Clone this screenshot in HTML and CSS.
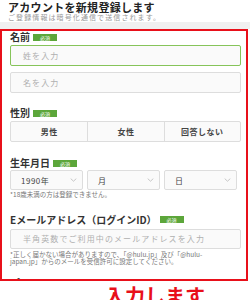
FILE: index.html
```html
<!DOCTYPE html>
<html lang="ja">
<head>
<meta charset="utf-8">
<link rel="stylesheet" href="styles.css">
</head>
<body>
<div class="header">
  <h1 class="title">アカウントを新規登録します</h1>
  <p class="sub">ご登録情報は暗号化通信で送信されます。</p>
</div>
<div class="band"></div>
<div class="frame">
  <div class="field f-name">
    <div class="label"><span>名前</span><span class="badge">必須</span></div>
    <div class="input active"><span class="ph">姓を入力</span></div>
    <div class="input second"><span class="ph">名を入力</span></div>
  </div>
  <div class="field f-gender">
    <div class="label"><span>性別</span><span class="badge">必須</span></div>
    <div class="seg">
      <div class="seg-item">男性</div>
      <div class="seg-item">女性</div>
      <div class="seg-item">回答しない</div>
    </div>
  </div>
  <div class="field f-birth">
    <div class="label"><span>生年月日</span><span class="badge">必須</span></div>
    <div class="selects">
      <div class="select"><span>1990年</span><svg class="chev" viewBox="0 0 8 5" width="7" height="4"><path d="M0.5 0.8 L4 4 L7.5 0.8" fill="none" stroke="#aaa" stroke-width="0.8"/></svg></div>
      <div class="select"><span>月</span><svg class="chev" viewBox="0 0 8 5" width="7" height="4"><path d="M0.5 0.8 L4 4 L7.5 0.8" fill="none" stroke="#aaa" stroke-width="0.8"/></svg></div>
      <div class="select"><span>日</span><svg class="chev" viewBox="0 0 8 5" width="7" height="4"><path d="M0.5 0.8 L4 4 L7.5 0.8" fill="none" stroke="#aaa" stroke-width="0.8"/></svg></div>
    </div>
    <p class="note">*18歳未満の方は登録できません。</p>
  </div>
  <div class="field f-mail">
    <div class="label"><span>Eメールアドレス（ログインID）</span><span class="badge">必須</span></div>
    <div class="input mail"><span class="ph">半角英数でご利用中のメールアドレスを入力</span></div>
    <p class="note two">*正しく届かない場合がありますので、「@hulu.jp」及び「@hulu-<br>japan.jp」からのメールを受信許可に設定してください。</p>
  </div>
  <div class="field f-pass">
    <div class="label"><span>パスワード</span><span class="badge">必須</span></div>
  </div>
</div>
<div class="caption">入力します</div>
</body>
</html>
```
FILE: styles.css
```css
html, body {
  margin: 0;
  padding: 0;
  background: #fff;
  font-family: "Noto Sans CJK JP", "Noto Sans", sans-serif;
  color: #333;
  width: 250px;
  height: 300px;
  overflow: hidden;
}
.header {
  padding: 1px 8px 0;
  height: 21px;
  background: #fff;
}
.title {
  margin: 0;
  font-size: 11px;
  line-height: 12px;
  font-weight: 700;
  letter-spacing: 0.3px;
  color: #222;
}
.sub {
  margin: 0;
  font-size: 7px;
  line-height: 9px;
  letter-spacing: 1.1px;
  color: #999;
}
.band {
  height: 7px;
  background: #f0f0f0;
}
.frame {
  margin-right: 2px;
  height: 248px;
  border: 2px solid #e8101a;
  padding: 0 5px 0 8px;
  overflow: hidden;
  background: #fff;
}
.label {
  display: flex;
  align-items: center;
  gap: 3px;
  height: 10px;
  font-size: 10px;
  line-height: 10px;
  font-weight: 700;
  color: #333;
}
.badge {
  display: inline-flex;
  align-items: center;
  justify-content: center;
  width: 24px;
  height: 7px;
  background: #5ca63a;
  color: #fff;
  font-size: 5px;
  font-weight: 400;
  line-height: 7px;
}
.f-name { padding-top: 1px; }
.f-name .label { margin-bottom: 3px; }
.input {
  box-sizing: border-box;
  height: 21px;
  border: 1px solid #ddd;
  border-radius: 2px;
  background: #fafafa;
  display: flex;
  align-items: center;
  padding-left: 12px;
}
.input.active { border-color: #86c45a; }
.input.second { margin-top: 6px; }
.ph {
  font-size: 8px;
  letter-spacing: 1.1px;
  color: #b0b0b0;
}
.f-gender { margin-top: 15px; }
.f-gender .label { margin-bottom: 3px; }
.seg {
  display: grid;
  grid-template-columns: repeat(3, 1fr);
  height: 21px;
  border: 1px solid #ddd;
  border-radius: 2px;
  box-sizing: border-box;
  background: #fafafa;
}
.seg-item {
  display: flex;
  align-items: center;
  justify-content: center;
  font-size: 8px;
  font-weight: 700;
  letter-spacing: 0.5px;
  color: #444;
}
.seg-item + .seg-item { border-left: 1px solid #ddd; }
.f-birth { margin-top: 16px; }
.f-birth .label { margin-bottom: 2px; }
.selects {
  display: grid;
  grid-template-columns: repeat(3, 73px);
  gap: 4px;
}
.select {
  box-sizing: border-box;
  height: 20px;
  border: 1px solid #ddd;
  border-radius: 2px;
  background: #fafafa;
  display: flex;
  align-items: center;
  justify-content: space-between;
  padding: 0 5px 0 10px;
  font-size: 8px;
  letter-spacing: 0.5px;
  color: #444;
}
.chev { display: block; }
.note {
  margin: 1px 0 0;
  font-size: 6.5px;
  line-height: 7.5px;
  color: #777;
}
.f-mail { margin-top: 16px; }
.f-mail .label { margin-bottom: 4px; }
.input.mail { height: 20px; }
.note.two { margin-top: 2px; }
.f-pass { margin-top: 12px; }
.caption {
  margin-top: 4px;
  padding-left: 60px;
  text-align: center;
  font-size: 20px;
  line-height: 22px;
  font-weight: 700;
  color: #e8101a;
}
```
